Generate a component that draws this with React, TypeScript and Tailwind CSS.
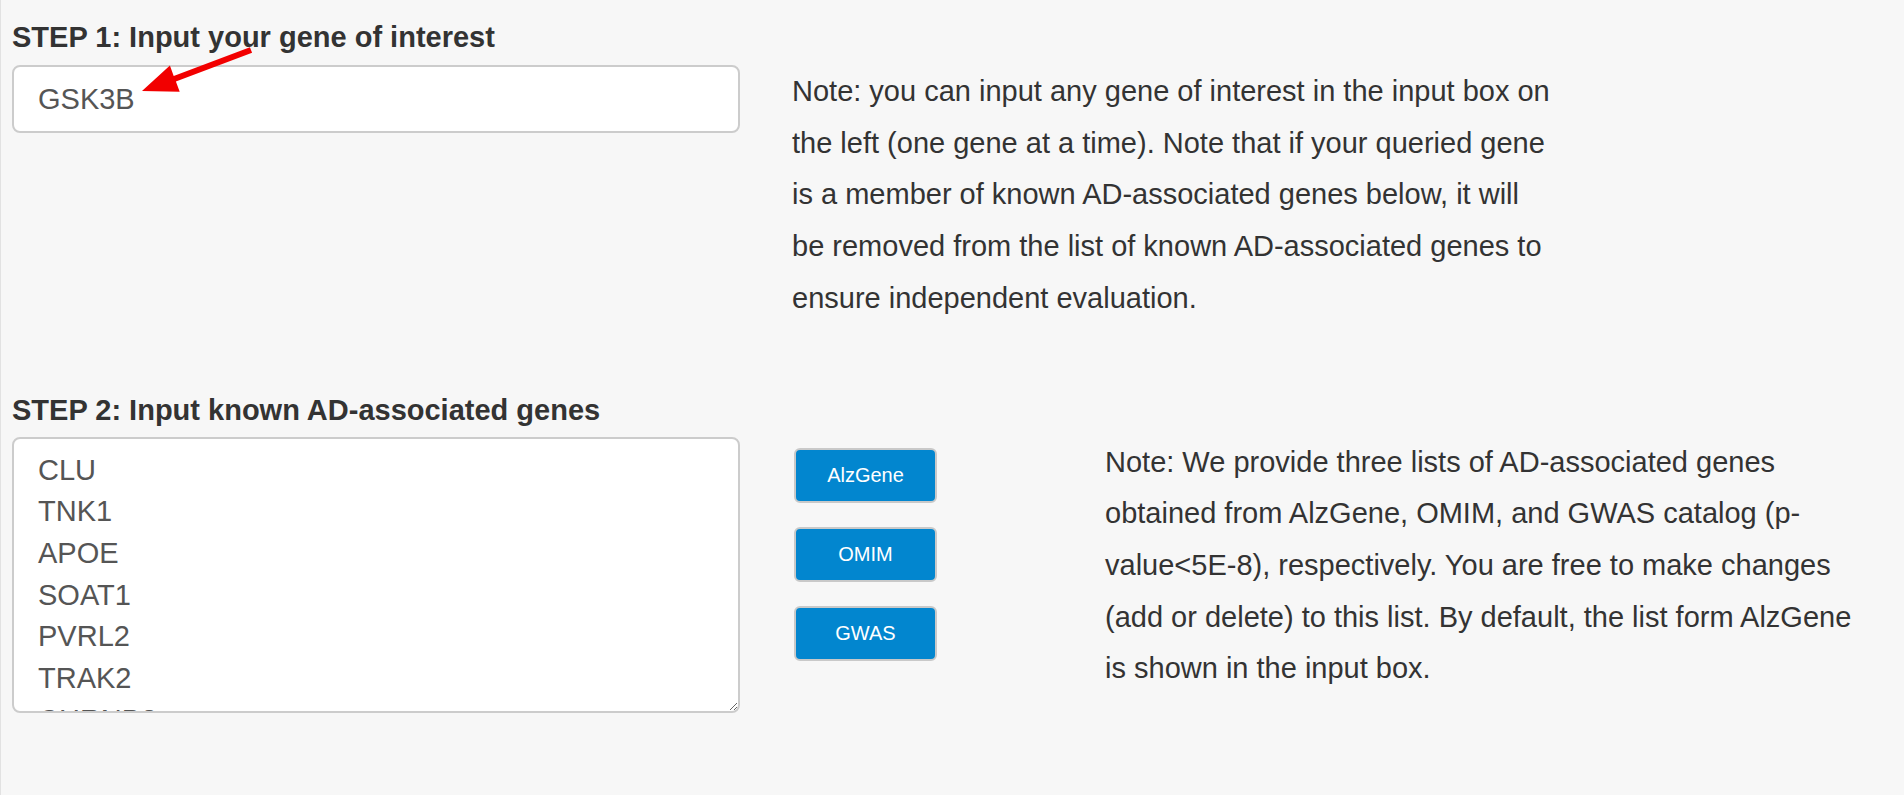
import React from 'react';

const FONT = '"Liberation Sans", Arial, Helvetica, sans-serif';

const ALZGENE = [
  'CLU',
  'TNK1',
  'APOE',
  'SOAT1',
  'PVRL2',
  'TRAK2',
  'CHRNB2',
  'TF',
  'ACE',
  'CST3',
  'GAB2',
  'BIN1',
];

function RedArrow() {
  // red annotation arrow pointing at the gene input
  return (
    <svg
      className="absolute left-0 top-0 pointer-events-none"
      width="300"
      height="120"
      viewBox="0 0 300 120"
    >
      <polygon
        points="141,91 168.9,65.6 172.7,75.9 248.9,47.2 251.1,52.8 174.9,81.5 178.7,91.8"
        fill="#f20000"
      />
    </svg>
  );
}

function ListButton({ label }: { label: string }) {
  return (
    <button
      type="button"
      className="h-[55px] w-[143px] rounded-[6px] border-2 border-[#c9c9c9] bg-[#0286cf] text-[20px] text-white"
    >
      {label}
    </button>
  );
}

export default function App() {
  return (
    <div
      className="relative min-h-[795px] border-l border-[#e2e2e2] bg-[#f7f7f7] pl-[11px] text-[#333333]"
      style={{ fontFamily: FONT }}
    >
      {/* Step 1 */}
      <h2 className="pt-[21px] text-[29px] font-bold leading-[32px]">
        STEP 1: Input your gene of interest
      </h2>
      <div className="mt-[12px] flex items-start">
        <input
          type="text"
          defaultValue="GSK3B"
          className="h-[68px] w-[728px] rounded-[8px] border-2 border-[#cccccc] bg-white px-[24px] text-[29px] text-[#555555] outline-none"
        />
        <p className="ml-[52px] mt-[1px] w-[760px] text-[29px] leading-[51.7px]">
          Note: you can input any gene of interest in the input box on the left (one gene at a
          time). Note that if your queried gene is a member of known AD-associated genes below, it
          will be removed from the list of known AD-associated genes to ensure independent
          evaluation.
        </p>
      </div>

      {/* Step 2 */}
      <h2 className="mt-[69px] text-[29px] font-bold leading-[32px]">
        STEP 2: Input known AD-associated genes
      </h2>
      <div className="mt-[11px] flex items-start">
        <textarea
          defaultValue={ALZGENE.join('\n')}
          className="h-[276px] w-[728px] overflow-hidden rounded-[8px] border-2 border-[#cccccc] bg-white px-[24px] pt-[11px] text-[29px] leading-[41.7px] text-[#555555] outline-none"
        />
        <div className="ml-[54px] mt-[11px] flex flex-col gap-[24px]">
          <ListButton label="AlzGene" />
          <ListButton label="OMIM" />
          <ListButton label="GWAS" />
        </div>
        <p className="ml-[168px] w-[762px] text-[29px] leading-[51.7px]">
          Note: We provide three lists of AD-associated genes obtained from AlzGene, OMIM, and GWAS
          catalog (p-value&lt;5E-8), respectively. You are free to make changes (add or delete) to
          this list. By default, the list form AlzGene is shown in the input box.
        </p>
      </div>

      <RedArrow />
    </div>
  );
}
